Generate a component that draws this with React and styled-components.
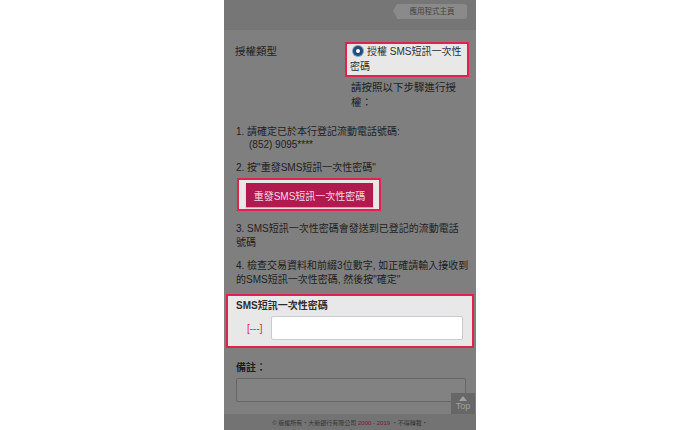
import styled, { createGlobalStyle } from "styled-components";

const GlobalStyle = createGlobalStyle`
  html, body {
    margin: 0;
    padding: 0;
    background: #ffffff;
  }
  body {
    font-family: "Liberation Sans", "Noto Sans CJK TC", sans-serif;
  }
`;

function App() {
  return (
    <>
      <GlobalStyle />
      <Page>
        <Header>
          <HomeTab>應用程式主頁</HomeTab>
        </Header>
        <Content>
          <AuthRow>
            <AuthLabel>授權類型</AuthLabel>
            <AuthSide>
              <Highlight>
                <RadioBox>
                  <Radio />
                  授權 SMS短訊一次性<br />密碼
                </RadioBox>
              </Highlight>
              <Hint>
                請按照以下步驟進行授<br />權：
              </Hint>
            </AuthSide>
          </AuthRow>

          <Step $top={15} $lh={13}>
            1. 請確定已於本行登記流動電話號碼:
            <Indent>(852) 9095****</Indent>
          </Step>
          <Step $top={10}>2. 按"重發SMS短訊一次性密碼"</Step>
          <ButtonBox>
            <ResendButton>重發SMS短訊一次性密碼</ResendButton>
          </ButtonBox>
          <Step $top={11}>
            3. SMS短訊一次性密碼會發送到已登記的流動電話<br />號碼
          </Step>
          <Step $top={9}>
            4. 檢查交易資料和前綴3位數字, 如正確請輸入接收到<br />的SMS短訊一次性密碼, 然後按"確定"
          </Step>

          <OtpBox>
            <FieldTitle>SMS短訊一次性密碼</FieldTitle>
            <OtpRow>
              <Prefix>[---]</Prefix>
              <OtpInput type="text" />
            </OtpRow>
          </OtpBox>

          <FieldTitle $top={13}>備註：</FieldTitle>
          <Remark />
        </Content>
        <TopButton>
          <TopArrow />
          Top
        </TopButton>
        <Footer>
          © 版權所有・大新銀行有限公司 <Years>2000 - 2019</Years> ・不得轉載・
        </Footer>
      </Page>
    </>
  );
}

const Page = styled.div`
  position: relative;
  width: 252px;
  height: 430px;
  margin: 0 auto;
  background: #7f7f7f;
  display: flex;
  flex-direction: column;
  overflow: hidden;
  color: #1e1e1e;
`;

const Header = styled.div`
  height: 30px;
  flex: none;
  background: #767676;
  display: flex;
  justify-content: flex-end;
  align-items: flex-start;
  padding: 4px 9px 0 0;
  box-sizing: border-box;
`;

const HomeTab = styled.div`
  position: relative;
  height: 15px;
  width: 70px;
  background: #8a8a8a;
  border-radius: 0 3px 3px 0;
  font-size: 7.5px;
  line-height: 15px;
  color: #444;
  text-align: center;
  &::before {
    content: "";
    position: absolute;
    left: -4px;
    top: 0;
    border-style: solid;
    border-width: 7.5px 4px 7.5px 0;
    border-color: transparent #8a8a8a transparent transparent;
  }
`;

const Content = styled.div`
  flex: 1;
  padding: 12px 10px 0 12px;
  font-size: 10px;
  white-space: nowrap;
`;

const AuthRow = styled.div`
  display: flex;
  justify-content: space-between;
  align-items: flex-start;
`;

const AuthLabel = styled.div`
  font-size: 10.5px;
  line-height: 15px;
  padding-top: 2px;
  margin-left: -1px;
`;

const AuthSide = styled.div`
  width: 124px;
  margin-right: -3px;
`;

const Highlight = styled.div`
  border: 2px solid #e2214f;
  background: #e8e8e8;
  box-sizing: border-box;
`;

const RadioBox = styled.div`
  padding: 0 4px 1px 3px;
  font-size: 10px;
  line-height: 15px;
  color: #2e2e2e;
`;

const Radio = styled.span`
  display: inline-block;
  width: 10px;
  height: 10px;
  border-radius: 50%;
  background: #1f4d78;
  box-shadow: 0 0 0 1px #7fa0bf;
  position: relative;
  vertical-align: -1px;
  margin: 0 4px 0 3px;
  &::after {
    content: "";
    position: absolute;
    left: 3px;
    top: 3px;
    width: 4px;
    height: 4px;
    border-radius: 50%;
    background: #ffffff;
  }
`;

const Hint = styled.div`
  margin: 3px 6px 0 6px;
  font-size: 10.5px;
  line-height: 15px;
`;

const Step = styled.div`
  margin-top: ${(p) => p.$top}px;
  line-height: ${(p) => p.$lh || 14}px;
`;

const Indent = styled.div`
  padding-left: 13px;
`;

const ButtonBox = styled.div`
  display: inline-block;
  margin: 3px 0 0 1px;
  padding: 3px 6px 2px 7px;
  border: 2px solid #e2214f;
  background: #e8e8e8;
`;

const ResendButton = styled.button`
  display: block;
  width: 127px;
  height: 24px;
  border: none;
  background: #b11a4f;
  color: #f4dbe3;
  font-family: inherit;
  font-size: 10px;
  padding: 0;
  box-shadow: 0 1px 1px rgba(0, 0, 0, 0.25);
`;

const OtpBox = styled.div`
  margin: 7px -8px 0 -10px;
  padding: 3px 9px 6px 8px;
  border: 2px solid #e2214f;
  background: #e8e8e8;
  color: #2e2e2e;
`;

const FieldTitle = styled.div`
  margin-top: ${(p) => p.$top || 0}px;
  font-weight: bold;
  line-height: 14px;
`;

const OtpRow = styled.div`
  display: flex;
  align-items: center;
  margin-top: 3px;
`;

const Prefix = styled.span`
  color: #e52a2e;
  font-size: 10px;
  margin: 0 9px 0 11px;
  width: 15px;
  white-space: nowrap;
`;

const OtpInput = styled.input`
  flex: 1;
  height: 24px;
  box-sizing: border-box;
  border: 1px solid #c7ccd2;
  border-radius: 2px;
  background: #ffffff;
  outline: none;
`;

const Remark = styled.div`
  margin-top: 3px;
  width: 230px;
  height: 24px;
  box-sizing: border-box;
  border: 1px solid #666;
  border-radius: 2px;
  background: #828282;
`;

const TopButton = styled.div`
  position: absolute;
  right: 1px;
  bottom: 16px;
  width: 24px;
  height: 21px;
  background: #676767;
  color: #a0a0a0;
  font-size: 9px;
  display: flex;
  flex-direction: column;
  align-items: center;
  justify-content: center;
  line-height: 9px;
`;

const TopArrow = styled.span`
  width: 0;
  height: 0;
  border-style: solid;
  border-width: 0 4.5px 5px 4.5px;
  border-color: transparent transparent #a0a0a0 transparent;
  margin-bottom: 1px;
`;

const Footer = styled.div`
  flex: none;
  height: 16px;
  background: #737373;
  font-size: 6px;
  line-height: 18px;
  text-align: center;
  color: #333;
  position: relative;
  z-index: 1;
`;

const Years = styled.span`
  color: #7a1331;
`;

export default App;
